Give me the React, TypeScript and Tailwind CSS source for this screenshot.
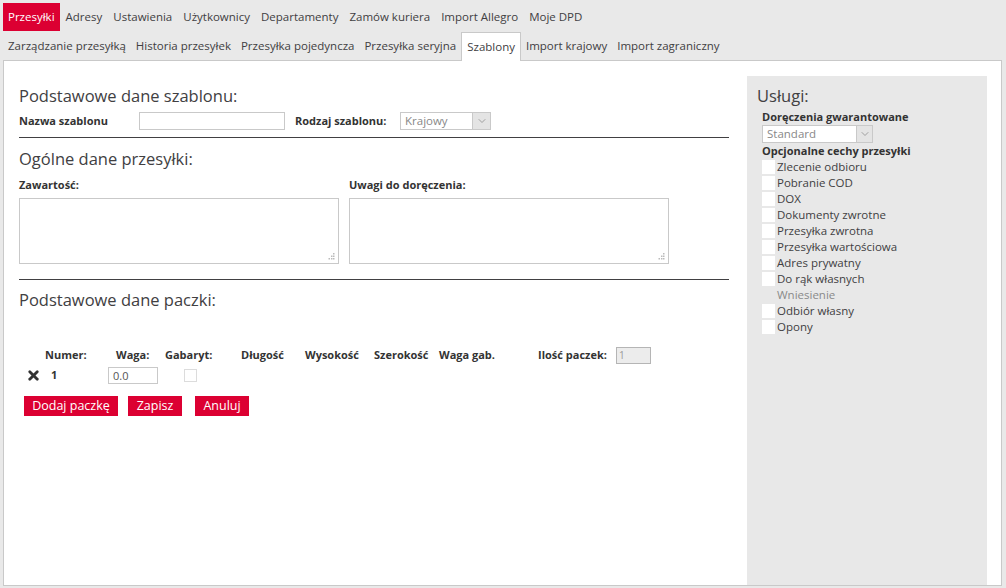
import React from 'react'
import { X, ChevronDown } from 'lucide-react'

const topNav = ['Przesyłki', 'Adresy', 'Ustawienia', 'Użytkownicy', 'Departamenty', 'Zamów kuriera', 'Import Allegro', 'Moje DPD']
const subNav = ['Zarządzanie przesyłką', 'Historia przesyłek', 'Przesyłka pojedyncza', 'Przesyłka seryjna', 'Szablony', 'Import krajowy', 'Import zagraniczny']
const features = [
  'Zlecenie odbioru',
  'Pobranie COD',
  'DOX',
  'Dokumenty zwrotne',
  'Przesyłka zwrotna',
  'Przesyłka wartościowa',
  'Adres prywatny',
  'Do rąk własnych',
  'Wniesienie',
  'Odbiór własny',
  'Opony',
]

const font = { fontFamily: '"Open Sans", "Liberation Sans", sans-serif' }

function SelectBox({ value, width, arrow }: { value: string; width: string; arrow: string }) {
  return (
    <div className={`flex h-[18px] ${width} border border-[#c9c9c9] bg-white`}>
      <span className="flex-1 pl-1 text-[11.5px] leading-[16px] text-[#888]">{value}</span>
      <span className={`flex ${arrow} items-center justify-center border-l border-[#c9c9c9] bg-[#e4e4e4]`}>
        <ChevronDown className="h-3 w-3 text-[#888]" strokeWidth={1.5} />
      </span>
    </div>
  )
}

function Grip() {
  return (
    <svg className="absolute bottom-[3px] right-[3px]" width="7" height="7" viewBox="0 0 7 7">
      <rect x="5" y="0" width="1.5" height="1.5" fill="#bbb" />
      <rect x="3" y="2.5" width="1.5" height="1.5" fill="#bbb" />
      <rect x="5" y="2.5" width="1.5" height="1.5" fill="#bbb" />
      <rect x="0.5" y="5" width="1.5" height="1.5" fill="#bbb" />
      <rect x="3" y="5" width="1.5" height="1.5" fill="#bbb" />
      <rect x="5" y="5" width="1.5" height="1.5" fill="#bbb" />
    </svg>
  )
}

function Area({ label }: { label: string }) {
  return (
    <div>
      <div className="text-[11px] font-bold leading-[14px]">{label}</div>
      <div className="relative mt-[6px] h-[66px] w-[320px] border border-[#c9c9c9]">
        <textarea className="block h-full w-full resize-none outline-none" />
        <Grip />
      </div>
    </div>
  )
}

export default function App() {
  return (
    <div className="h-[588px] w-[1006px] bg-[#e9e9e9] text-[#333]" style={font}>
      <div className="flex h-[31px] items-end pl-[3px]">
        {topNav.map((t, i) => (
          <span
            key={t}
            className={`flex h-[28px] items-center px-[5px] text-[11.5px] ${i === 0 ? 'bg-[#dc0032] text-white' : 'text-[#414042]'} ${i > 0 ? 'ml-[1px]' : ''}`}
          >
            {t}
          </span>
        ))}
      </div>
      <div className="flex h-[29px] items-end pl-[3px]">
        {subNav.map((t) => (
          <span
            key={t}
            className={`flex h-[28px] items-center px-[5px] text-[11.5px] text-[#414042] ${t === 'Szablony' ? 'relative z-10 -mb-px h-[29px] border border-b-0 border-[#c9c9c9] bg-white' : ''}`}
          >
            {t}
          </span>
        ))}
      </div>

      <div className="ml-[3px] flex h-[526px] w-[999px] border border-[#c9c9c9] bg-white pl-[15px] pr-[14px] pt-[15px]">
        <div className="w-[710px] pt-[10px]">
          <h2 className="text-[16.5px] leading-[20px] text-[#414042]">Podstawowe dane szablonu:</h2>
          <div className="mt-[6px] flex items-center">
            <span className="w-[120px] text-[11px] font-bold">Nazwa szablonu</span>
            <div className="h-[18px] w-[146px] border border-[#c9c9c9]" />
            <span className="ml-[10px] w-[105px] text-[11px] font-bold">Rodzaj szablonu:</span>
            <SelectBox value="Krajowy" width="w-[91px]" arrow="w-[18px]" />
          </div>
          <div className="mt-[7px] h-px bg-[#414042]" />

          <h2 className="mt-[11px] text-[16.5px] leading-[20px] text-[#414042]">Ogólne dane przesyłki:</h2>
          <div className="mt-[9px] flex gap-[10px]">
            <Area label="Zawartość:" />
            <Area label="Uwagi do doręczenia:" />
          </div>
          <div className="mt-[15px] h-px bg-[#414042]" />

          <h2 className="mt-[10px] text-[16.5px] leading-[20px] text-[#414042]">Podstawowe dane paczki:</h2>

          <div className="mt-[37px] flex items-center text-[11px] font-bold">
            <span className="ml-[26px] w-[71px]">Numer:</span>
            <span className="w-[49px]">Waga:</span>
            <span className="w-[76px]">Gabaryt:</span>
            <span className="w-[64px]">Długość</span>
            <span className="w-[69px]">Wysokość</span>
            <span className="w-[65px]">Szerokość</span>
            <span className="w-[99px]">Waga gab.</span>
            <span className="w-[78px]">Ilość paczek:</span>
            <div className="h-[17px] w-[35px] border border-[#b5b5b5] bg-[#ececec] pl-[2px] text-[10px] font-normal leading-[15px] text-[#999]">1</div>
          </div>
          <div className="mt-[3px] flex items-center">
            <X className="ml-[7px] h-[15px] w-[15px] text-[#333]" strokeWidth={4.5} />
            <span className="ml-[10px] w-[57px] text-[11px] font-bold">1</span>
            <div className="h-[17px] w-[50px] border border-[#c9c9c9] pl-[4px] text-[11px] leading-[15px] text-[#555]">0.0</div>
            <span className="ml-[26px] h-[13px] w-[13px] border border-[#dcdcdc] bg-white" />
          </div>
          <div className="mt-[12px] flex pl-[5px]">
            <button className="h-[20px] w-[94px] bg-[#dc0032] text-[12.5px] text-white">Dodaj paczkę</button>
            <button className="ml-[10px] h-[20px] w-[54px] bg-[#dc0032] text-[12.5px] text-white">Zapisz</button>
            <button className="ml-[13px] h-[20px] w-[54px] bg-[#dc0032] text-[12.5px] text-white">Anuluj</button>
          </div>
        </div>

        <aside className="ml-[18px] w-[240px] bg-[#e8e8e8] pl-[10px] pt-[10px]">
          <h2 className="text-[16.5px] leading-[20px] text-[#414042]">Usługi:</h2>
          <div className="ml-[5px] mt-[4px]">
            <div className="text-[11px] font-bold leading-[14px]">Doręczenia gwarantowane</div>
            <div className="mt-[1px]">
              <SelectBox value="Standard" width="w-[111px]" arrow="w-[16px]" />
            </div>
            <div className="text-[11px] font-bold leading-[16px]">Opcjonalne cechy przesyłki</div>
            <div className="flex flex-col">
              {features.map((f) => (
                <label key={f} className="flex h-[16px] items-center">
                  <span className={`h-[14px] w-[13px] ${f === 'Wniesienie' ? 'bg-[#e8e8e8]' : 'bg-white'}`} />
                  <span className={`ml-[2px] text-[11.5px] ${f === 'Wniesienie' ? 'text-[#8a8a8a]' : 'text-[#414042]'}`}>{f}</span>
                </label>
              ))}
            </div>
          </div>
        </aside>
      </div>
    </div>
  )
}
